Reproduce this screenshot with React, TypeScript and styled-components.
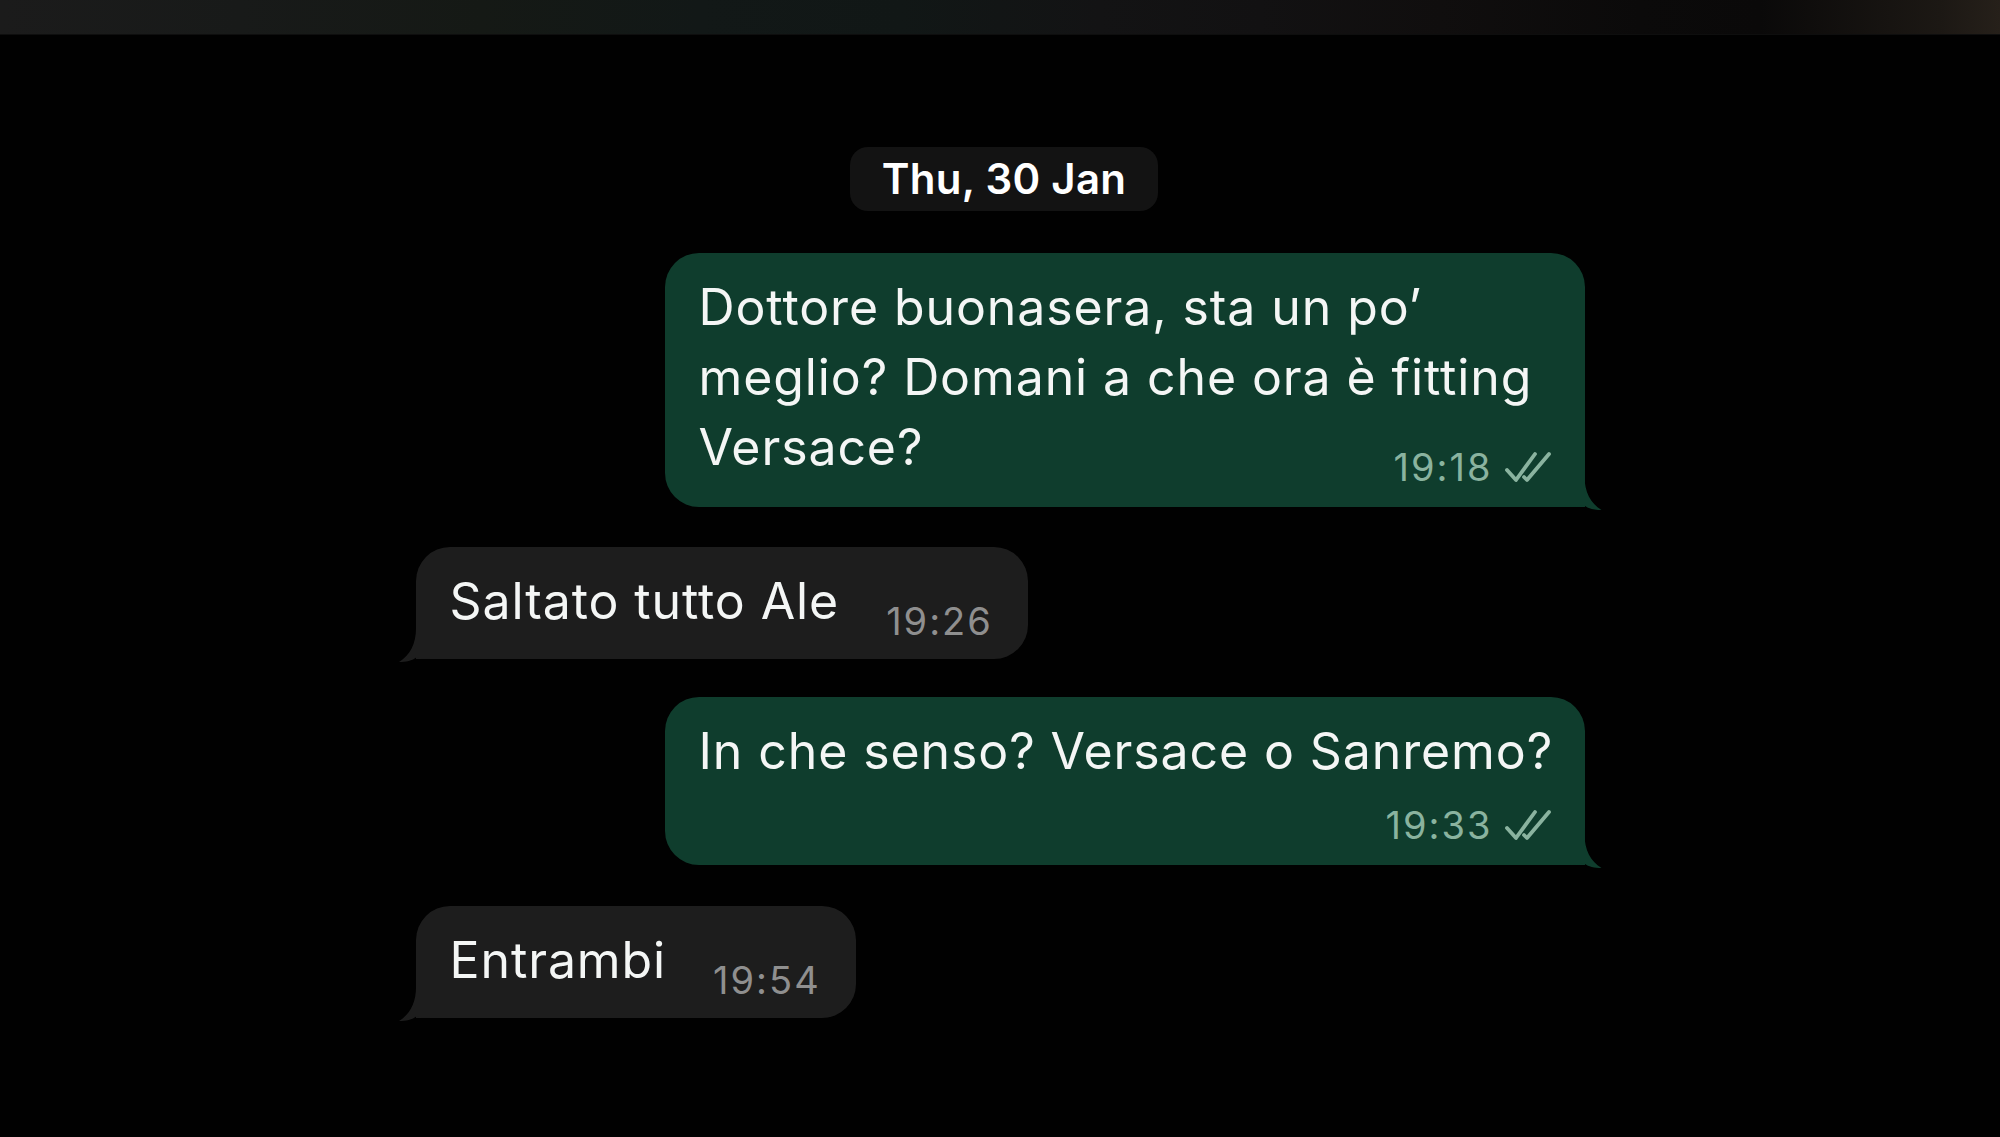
import React from "react";
import styled, { createGlobalStyle, css } from "styled-components";

const GlobalStyle = createGlobalStyle`
  html, body {
    margin: 0;
    padding: 0;
    background: #000;
  }
  body {
    font-family: Inter, "Noto Sans", "Liberation Sans", sans-serif;
    -webkit-font-smoothing: antialiased;
  }
`;

const Page = styled.div`
  min-height: 100vh;
  background: #010101;
  display: flex;
  flex-direction: column;
`;

const TopBar = styled.div`
  height: 34px;
  flex-shrink: 0;
  background: linear-gradient(
    90deg,
    #1b1b1b 0%,
    #181a19 12%,
    #151915 24%,
    #121817 35%,
    #111716 45%,
    #131314 55%,
    #121112 63%,
    #100e0e 72%,
    #0b0a0a 82%,
    #0a0909 88%,
    #1c1814 97%,
    #26201a 100%
  );
  border-bottom: 1px solid #0e0e0e;
`;

const Chat = styled.div`
  width: 1169px;
  margin: 0 auto;
  padding-top: 112px;
  display: flex;
  flex-direction: column;
`;

const DatePill = styled.div`
  align-self: center;
  margin-left: 8px;
  height: 64px;
  padding: 0 32px;
  border-radius: 18px;
  background: #131313;
  color: #ffffff;
  font-size: 42px;
  font-weight: 600;
  line-height: 64px;
  letter-spacing: 0.3px;
  margin-bottom: 42px;
`;

const Bubble = styled.div<{ $out?: boolean; $gapAfter: number }>`
  position: relative;
  display: flow-root;
  max-width: 920px;
  box-sizing: border-box;
  border-radius: 34px;
  font-size: 50px;
  line-height: 70px;
  letter-spacing: 0.9px;
  color: #f4f6f5;
  margin-bottom: ${(p) => p.$gapAfter}px;
  ${(p) =>
    p.$out
      ? css`
          align-self: flex-end;
          background: #0f3d2d;
          padding: 19px 31px 20px 34px;
          border-bottom-right-radius: 0;
        `
      : css`
          align-self: flex-start;
          background: #1d1d1d;
          padding: 19px 35px 18px 34px;
          border-bottom-left-radius: 0;
        `}

  &::after {
    content: "";
    position: absolute;
    bottom: -3px;
    width: 40px;
    height: 40px;
    background: inherit;
    clip-path: path("M0 0 H21 V6 C21 22 27 33 38 40 C31 40 25 39 20 35 C15 37 8 37 0 37 Z");
    ${(p) =>
      p.$out
        ? css`
            right: -19px;
          `
        : css`
            left: -19px;
            transform: scaleX(-1);
          `}
  }
`;

const Meta = styled.span<{ $out?: boolean; $below?: boolean }>`
  float: right;
  display: inline-flex;
  align-items: center;
  gap: 11px;
  height: 40px;
  margin-left: 47px;
  margin-top: ${(p) => (p.$below ? 19 : 35)}px;
  font-size: 38px;
  line-height: 40px;
  letter-spacing: 2px;
  color: ${(p) => (p.$out ? "#8ab39f" : "#8f8f8f")};
`;

const Ticks = styled.svg`
  width: 50px;
  height: 34px;
  display: block;
`;

function DoubleTick() {
  return (
    <Ticks viewBox="0 0 50 34" fill="none" stroke="currentColor" strokeWidth={3.8} strokeLinecap="round" strokeLinejoin="round">
      <path d="M3 20 L12 30 L31 4" />
      <path d="M20 27 L23 30 L45 4" />
    </Ticks>
  );
}

type Msg = {
  text: string;
  time: string;
  out?: boolean;
  below?: boolean;
  gap: number;
};

const messages: Msg[] = [
  {
    text: "Dottore buonasera, sta un po’ meglio? Domani a che ora è fitting Versace?",
    time: "19:18",
    out: true,
    gap: 40,
  },
  { text: "Saltato tutto Ale", time: "19:26", gap: 38 },
  {
    text: "In che senso? Versace o Sanremo?",
    time: "19:33",
    out: true,
    below: true,
    gap: 41,
  },
  { text: "Entrambi", time: "19:54", gap: 0 },
];

export default function App() {
  return (
    <>
      <GlobalStyle />
      <Page>
        <TopBar />
        <Chat>
          <DatePill>Thu, 30 Jan</DatePill>
          {messages.map((m, i) => (
            <Bubble key={i} $out={m.out} $gapAfter={m.gap}>
              {m.text}
              <Meta $out={m.out} $below={m.below}>
                {m.time}
                {m.out && <DoubleTick />}
              </Meta>
            </Bubble>
          ))}
        </Chat>
      </Page>
    </>
  );
}
